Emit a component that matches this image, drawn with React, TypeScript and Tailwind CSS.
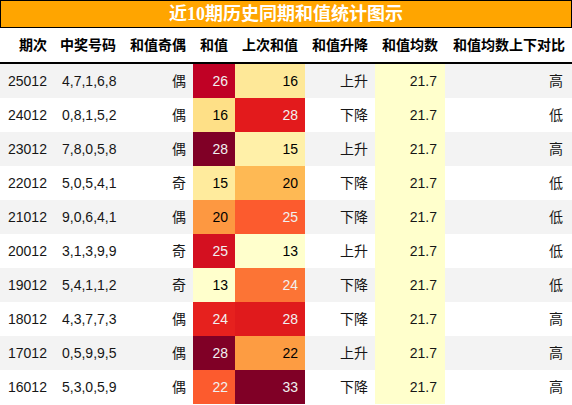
import React from "react";

type Row = {
  issue: string;
  nums: string;
  parity: string;
  sum: number;
  sumBg: string;
  sumDark: boolean;
  prev: number;
  prevBg: string;
  prevDark: boolean;
  trend: string;
  avg: string;
  cmp: string;
};

const rows: Row[] = [
  { issue: "25012", nums: "4,7,1,6,8", parity: "偶", sum: 26, sumBg: "bg-[#c00125]", sumDark: true, prev: 16, prevBg: "bg-[#fee898]", prevDark: false, trend: "上升", avg: "21.7", cmp: "高" },
  { issue: "24012", nums: "0,8,1,5,2", parity: "偶", sum: 16, sumBg: "bg-[#fee087]", sumDark: false, prev: 28, prevBg: "bg-[#e31a1c]", prevDark: true, trend: "下降", avg: "21.7", cmp: "低" },
  { issue: "23012", nums: "7,8,0,5,8", parity: "偶", sum: 28, sumBg: "bg-[#800026]", sumDark: true, prev: 15, prevBg: "bg-[#fff0a8]", prevDark: false, trend: "上升", avg: "21.7", cmp: "高" },
  { issue: "22012", nums: "5,0,5,4,1", parity: "奇", sum: 15, sumBg: "bg-[#ffeb9d]", sumDark: false, prev: 20, prevBg: "bg-[#feb954]", prevDark: false, trend: "下降", avg: "21.7", cmp: "低" },
  { issue: "21012", nums: "9,0,6,4,1", parity: "偶", sum: 20, sumBg: "bg-[#fd9841]", sumDark: false, prev: 25, prevBg: "bg-[#fc5b2e]", prevDark: true, trend: "下降", avg: "21.7", cmp: "低" },
  { issue: "20012", nums: "3,1,3,9,9", parity: "奇", sum: 25, sumBg: "bg-[#d41020]", sumDark: true, prev: 13, prevBg: "bg-[#ffffcc]", prevDark: false, trend: "上升", avg: "21.7", cmp: "低" },
  { issue: "19012", nums: "5,4,1,1,2", parity: "奇", sum: 13, sumBg: "bg-[#ffffcc]", sumDark: false, prev: 24, prevBg: "bg-[#fc7435]", prevDark: true, trend: "下降", avg: "21.7", cmp: "低" },
  { issue: "18012", nums: "4,3,7,7,3", parity: "偶", sum: 24, sumBg: "bg-[#e6211e]", sumDark: true, prev: 28, prevBg: "bg-[#e01a1c]", prevDark: true, trend: "下降", avg: "21.7", cmp: "高" },
  { issue: "17012", nums: "0,5,9,9,5", parity: "偶", sum: 28, sumBg: "bg-[#800026]", sumDark: true, prev: 22, prevBg: "bg-[#fd9c42]", prevDark: false, trend: "上升", avg: "21.7", cmp: "高" },
  { issue: "16012", nums: "5,3,0,5,9", parity: "偶", sum: 22, sumBg: "bg-[#fc5b2e]", sumDark: true, prev: 33, prevBg: "bg-[#800026]", prevDark: true, trend: "下降", avg: "21.7", cmp: "高" },
];

const headers = ["期次", "中奖号码", "和值奇偶", "和值", "上次和值", "和值升降", "和值均数", "和值均数上下对比"];

const grid = "grid grid-cols-[54px_69px_70px_42px_70px_70px_70px_127px]";

export default function App() {
  return (
    <div className="w-[572px] h-[405px] bg-white overflow-hidden font-['Liberation_Sans','Noto_Sans_CJK_SC',sans-serif] text-[14px] text-[#161616]">
      <div className="h-[28px] bg-[#ffa500] border border-black flex items-center justify-center">
        <span className="text-white font-bold text-[18px] leading-none font-['Liberation_Serif','Noto_Sans_CJK_SC',serif]">
          近10期历史同期和值统计图示
        </span>
      </div>
      <div className={`${grid} h-[36px] border-b-2 border-black font-bold text-black`}>
        {headers.map((h) => (
          <div key={h} className="flex items-end justify-end pr-[7px] pb-[6px] whitespace-nowrap">
            {h}
          </div>
        ))}
      </div>
      {rows.map((r, i) => (
        <div key={r.issue} className={`${grid} h-[34px] ${i % 2 === 0 ? "bg-[#f3f3f3]" : "bg-white"}`}>
          <div className="flex items-center pl-[8px]">{r.issue}</div>
          <div className="flex items-center pl-[8px]">{r.nums}</div>
          <div className="flex items-center justify-end pr-[7px]">{r.parity}</div>
          <div className={`flex items-center justify-end pr-[7px] ${r.sumBg} ${r.sumDark ? "text-[#f1f1f1]" : "text-black"}`}>
            {r.sum}
          </div>
          <div className={`flex items-center justify-end pr-[7px] ${r.prevBg} ${r.prevDark ? "text-[#f1f1f1]" : "text-black"}`}>
            {r.prev}
          </div>
          <div className="flex items-center justify-end pr-[7px]">{r.trend}</div>
          <div className="flex items-center justify-end pr-[8px] bg-[#ffffcc]">{r.avg}</div>
          <div className="flex items-center justify-end pr-[9px]">{r.cmp}</div>
        </div>
      ))}
    </div>
  );
}
